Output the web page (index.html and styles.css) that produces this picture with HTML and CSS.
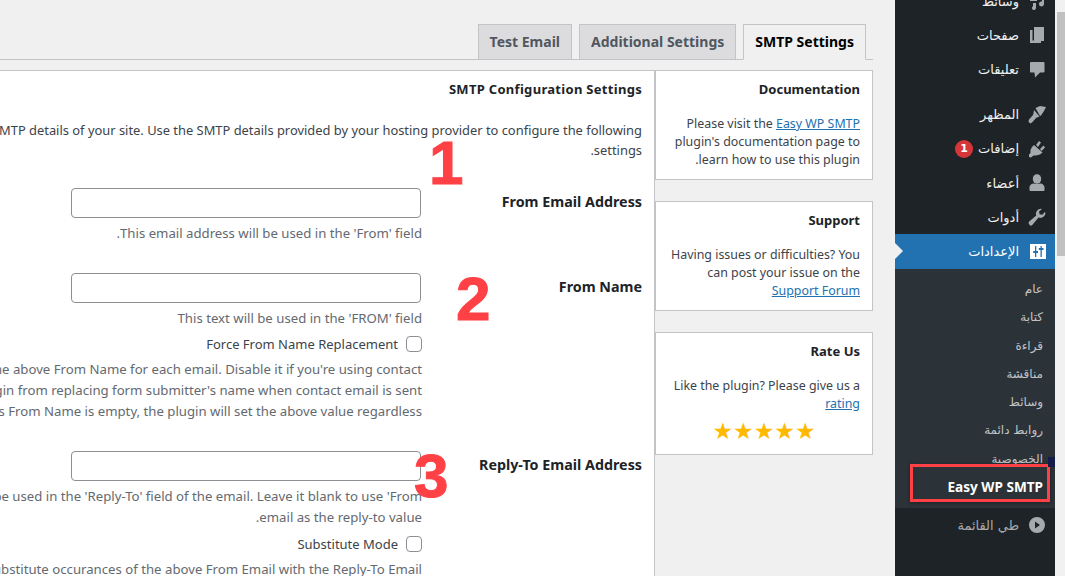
FILE: index.html
```html
<!DOCTYPE html>
<html lang="ar" dir="rtl">
<head>
  <meta charset="UTF-8" />
  <title>Easy WP SMTP</title>
  <link rel="stylesheet" href="styles.css">
</head>
<body>

  <div class="scrollbar"><div class="scrollbar-thumb"></div></div>

  <aside class="sidebar">
    <ul class="menu">
      <li class="menu-item">
        <svg class="menu-icon" viewBox="0 0 20 20"><path d="M3 3h7v7H3zM12 3l5-1v11a2.500 2.500 0 1 1-2-2.400V5l-3 .7zM6 12h3v5a2 2 0 1 1-3-1.700z"/></svg>
        <span>وسائط</span>
      </li>
      <li class="menu-item">
        <svg class="menu-icon" viewBox="0 0 20 20"><path d="M7 2h10v14H7z"/><path d="M3 5h2.500v10.500H14V18H3z"/></svg>
        <span>صفحات</span>
      </li>
      <li class="menu-item">
        <svg class="menu-icon" viewBox="0 0 20 20"><path d="M4 3h12.500a1 1 0 0 1 1 1v8.500a1 1 0 0 1-1 1H13L8 18.500l-.5-5H4a1 1 0 0 1-1-1V4a1 1 0 0 1 1-1z"/></svg>
        <span>تعليقات</span>
      </li>
      <li class="menu-item menu-gap">
        <svg class="menu-icon" viewBox="0 0 20 20"><path d="M8.500 3L13 1l6 1-2 4-3 4.500-1 .5z"/><path d="M7 5l5.500 6.500-2.500 1-1 .5-3.500 4-2 1.500L1.500 17l.5-2.500L6 10l.5-2z"/></svg>
        <span>المظهر</span>
      </li>
      <li class="menu-item">
        <svg class="menu-icon" viewBox="0 0 20 20"><path d="M9 6l3-4 2 1.500-3 4.500zM13 10l3.500-3.500 1.500 2-3.500 3.500z"/><path d="M7 6l8.500 7.500L13 15.500l-4 1H6.500L4 18.500 2 18v-2.500l1.500-1.500v-3L5 8z"/></svg>
        <span>إضافات</span>
        <span class="badge">1</span>
      </li>
      <li class="menu-item">
        <svg class="menu-icon" viewBox="0 0 20 20"><ellipse cx="10" cy="6" rx="4.200" ry="4.800"/><path d="M2.500 17v-2.500C2.500 12 5 10.500 7 10.500c1 .8 5 .8 6 0 2 0 4.500 1.500 4.500 4V17a1 1 0 0 1-1 1h-13a1 1 0 0 1-1-1z"/></svg>
        <span>أعضاء</span>
      </li>
      <li class="menu-item">
        <svg class="menu-icon" viewBox="0 0 20 20"><path d="M18.500 6a5 5 0 0 1-7 4.500L5.500 17.800a2.200 2.200 0 0 1-3.300-.2 2.200 2.200 0 0 1 0-3l7-6A5 5 0 0 1 15 2l-3 2.500.6 2.700 2.700.6 2.600-2.800z"/></svg>
        <span>أدوات</span>
      </li>
      <li class="menu-item menu-item-active">
        <svg class="menu-icon" viewBox="0 0 20 20">
          <path d="M3 3h16v15H3z"/>
          <path class="slider" d="M8 5h1.300v5H11v2H9.300v4H8v-4H6.200v-2H8zM13.500 5h1.300v2H16.500v2h-1.700v7h-1.300V9h-1.700V7h1.700z"/>
        </svg>
        <span>الإعدادات</span>
      </li>
    </ul>

    <ul class="submenu">
      <li>عام</li>
      <li>كتابة</li>
      <li>قراءة</li>
      <li>مناقشة</li>
      <li>وسائط</li>
      <li>روابط دائمة</li>
      <li>الخصوصية</li>
      <li class="submenu-current">Easy WP SMTP</li>
    </ul>

    <div class="collapse">
      <svg class="menu-icon" viewBox="0 0 20 20"><path fill-rule="evenodd" d="M10 2a8 8 0 1 1 0 16 8 8 0 0 1 0-16zM13 10L8 6.500v7z"/></svg>
      <span>طي القائمة</span>
    </div>
  </aside>

  <main class="content">
    <div class="tabs">
      <a class="tab tab-active">SMTP Settings</a>
      <a class="tab">Additional Settings</a>
      <a class="tab">Test Email</a>
    </div>

    <div class="columns">
      <div class="side-cards">
        <section class="card">
          <h3 class="card-title">Documentation</h3>
          <p class="card-text">Please visit the <a href="#">Easy WP SMTP</a> plugin's documentation page to learn how to use this plugin.</p>
        </section>
        <section class="card">
          <h3 class="card-title">Support</h3>
          <p class="card-text">Having issues or difficulties? You can post your issue on the <a href="#">Support Forum</a></p>
        </section>
        <section class="card">
          <h3 class="card-title">Rate Us</h3>
          <p class="card-text">Like the plugin? Please give us a <a href="#">rating</a></p>
          <div class="stars">★★★★★</div>
        </section>
      </div>

      <section class="panel">
        <h3 class="panel-title">SMTP Configuration Settings</h3>
        <p class="intro">Configure the SMTP details of your site. Use the SMTP details provided by your hosting provider to configure the following settings.</p>

        <div class="form-row">
          <label class="form-label">From Email Address</label>
          <div class="form-field">
            <input type="text" class="text-input">
            <p class="help">This email address will be used in the 'From' field.</p>
          </div>
        </div>

        <div class="form-row">
          <label class="form-label">From Name</label>
          <div class="form-field">
            <input type="text" class="text-input">
            <p class="help">This text will be used in the 'FROM' field</p>
            <label class="check"><input type="checkbox" class="check-box"> Force From Name Replacement</label>
            <p class="help nowrap">When enabled, the plugin will set the above From Name for each email. Disable it if you're using contact</p>
            <p class="help nowrap">form plugins, it will prevent the plugin from replacing form submitter's name when contact email is sent</p>
            <p class="help nowrap">If email's From Name is empty, the plugin will set the above value regardless</p>
          </div>
        </div>

        <div class="form-row">
          <label class="form-label">Reply-To Email Address</label>
          <div class="form-field">
            <input type="text" class="text-input">
            <p class="help nowrap">Optional. This email address will be used in the 'Reply-To' field of the email. Leave it blank to use 'From</p>
            <p class="help">email as the reply-to value.</p>
            <label class="check"><input type="checkbox" class="check-box"> Substitute Mode</label>
            <p class="help nowrap">When enabled, the plugin will substitute occurances of the above From Email with the Reply-To Email</p>
          </div>
        </div>
      </section>
    </div>
  </main>

  <!-- annotations drawn over the screenshot -->
  <div class="mark mark-1">1</div>
  <div class="mark mark-2">2</div>
  <div class="mark mark-3">3</div>
  <div class="mark-box"></div>
  <div class="mark-patch"></div>

</body>
</html>
```

FILE: styles.css
```css
* {
  box-sizing: border-box;
}
html, body {
  height: 100%;
}
body {
  margin: 0;
  display: flex;
  height: 576px;
  overflow: hidden;
  font-family: "Noto Sans", "DejaVu Sans", sans-serif;
  font-size: 13px;
  color: #3c434a;
  background: #f0f0f1;
}
ul {
  list-style: none;
  margin: 0;
  padding: 0;
}
h3, p {
  margin: 0;
}
a {
  color: #2271b1;
}

.scrollbar {
  flex: 0 0 10px;
  background: #f1f1f1;
  padding: 12px 0 0 0;
}
.scrollbar-thumb {
  width: 8px;
  height: 244px;
  background: #c1c1c1;
}

.sidebar {
  flex: 0 0 160px;
  background: #1d2327;
  color: #f0f0f1;
  font-family: "DejaVu Sans", sans-serif;
}
.menu {
  margin-top: -16px;
}
.menu-item {
  position: relative;
  height: 34.200px;
  display: flex;
  align-items: center;
  font-size: 13px;
}
.menu-gap {
  margin-top: 11px;
}
.menu-icon {
  flex: 0 0 20px;
  width: 20px;
  height: 20px;
  margin: 0 8px;
  fill: #a7aaad;
}
.menu-item-active {
  background: #2271b1;
  color: #fff;
}
.menu-item-active .menu-icon {
  fill: #fff;
}
.menu-item-active .menu-icon .slider {
  fill: #2271b1;
}
.menu-item-active::after {
  content: "";
  position: absolute;
  left: 0;
  top: 9px;
  border-style: solid;
  border-width: 8px 0 8px 8px;
  border-color: transparent transparent transparent #f0f0f1;
}
.badge {
  width: 18px;
  height: 18px;
  margin-right: 5px;
  border-radius: 50%;
  background: #d63638;
  color: #fff;
  font-size: 11px;
  font-weight: bold;
  line-height: 18px;
  text-align: center;
}

.submenu {
  background: #2c3338;
  padding: 6.500px 12px 7px 0;
  color: #c3c4c7;
}
.submenu li {
  height: 28.300px;
  line-height: 28px;
  font-size: 12px;
}
.submenu .submenu-current {
  font-family: "Noto Sans", sans-serif;
  font-size: 13.600px;
  color: #fff;
  font-weight: bold;
}

.collapse {
  display: flex;
  align-items: center;
  height: 34px;
  color: #a7aaad;
  font-size: 13px;
}

.content {
  flex: 1;
  min-width: 0;
  padding: 24px 22px 0 0;
  overflow: hidden;
}
.tabs {
  display: flex;
  gap: 7px;
  height: 36px;
  padding-right: 7px;
  border-bottom: 1px solid #c3c4c7;
}
.tab {
  height: 36px;
  padding: 0 11px;
  line-height: 33px;
  font-size: 14px;
  font-weight: bold;
  color: #50575e;
  background: #dcdcde;
  border: 1px solid #c3c4c7;
  white-space: nowrap;
}
.tab-active {
  color: #000;
  background: #f0f0f1;
  border-bottom-color: #f0f0f1;
}

.columns {
  display: flex;
  margin-top: 10px;
}
.side-cards {
  flex: 0 0 218px;
  display: flex;
  flex-direction: column;
  gap: 21px;
}
.card {
  background: #fff;
  border: 1px solid #c3c4c7;
  padding: 9px 12px 10px;
}
.card-title {
  font-size: 13px;
  line-height: 18px;
  color: #1d2327;
  margin-bottom: 17px;
}
.card-text {
  font-size: 12.400px;
  line-height: 18px;
}
.stars {
  text-align: center;
  font-family: "DejaVu Sans", sans-serif;
  font-size: 23px;
  line-height: 26px;
  color: #ffb900;
  margin-top: 5px;
}

.panel {
  flex: 0 0 767px;
  height: 520px;
  background: #fff;
  border: 1px solid #c3c4c7;
  padding: 9px 12px;
}
.panel-title {
  font-size: 13px;
  letter-spacing: 0.300px;
  line-height: 18px;
  color: #1d2327;
  margin-bottom: 22px;
}
.intro {
  max-width: 745px;
  font-size: 12.900px;
  line-height: 20px;
  height: 68px;
}
.form-row {
  display: flex;
  margin-bottom: 29px;
}
.form-label {
  flex: 0 0 220px;
  padding-top: 4px;
  font-size: 14.300px;
  font-weight: bold;
  color: #1d2327;
}
.form-field {
  flex: 1;
}
.text-input {
  display: block;
  width: 350px;
  height: 30px;
  margin: 0 1px 0 0;
  border: 1px solid #8c8f94;
  border-radius: 4px;
  background: #fff;
}
.help {
  font-size: 13.200px;
  line-height: 21px;
  color: #646970;
}
.text-input + .help {
  margin-top: 5px;
}
.nowrap {
  white-space: nowrap;
}
.check {
  display: flex;
  align-items: center;
  height: 26px;
  margin: 2px 0 2px;
  font-size: 13px;
}
.help + .help + .check {
  margin-top: 3px;
}
.check-box {
  width: 16px;
  height: 16px;
  margin: 0 0 0 8px;
  appearance: none;
  background: #fff;
  border: 1px solid #8c8f94;
  border-radius: 4px;
}

.mark {
  position: absolute;
  font-family: "Liberation Sans", sans-serif;
  font-weight: bold;
  font-size: 62px;
  line-height: 66px;
  color: #ff4146;
  -webkit-text-stroke: 1px #ff4146;
}
.mark-1 { left: 429px; top: 130px; }
.mark-2 { left: 456px; top: 266px; }
.mark-3 { left: 414px; top: 443px; }
.mark-box {
  position: absolute;
  left: 910px;
  top: 464px;
  width: 140px;
  height: 38px;
  border: 3px solid #ff4146;
  box-shadow: 0 1px 4px rgba(0,0,0,0.4);
}
.mark-patch {
  position: absolute;
  left: 1048px;
  top: 457px;
  width: 7px;
  height: 10px;
  background: #141c4a;
}
```
